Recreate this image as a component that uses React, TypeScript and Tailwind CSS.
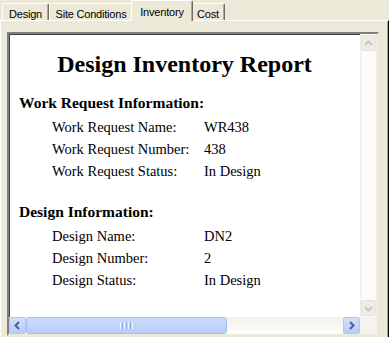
import React from 'react';

interface Field {
  label: string;
  value: string;
}

const workRequest: Field[] = [
  { label: 'Work Request Name:', value: 'WR438' },
  { label: 'Work Request Number:', value: '438' },
  { label: 'Work Request Status:', value: 'In Design' },
];

const design: Field[] = [
  { label: 'Design Name:', value: 'DN2' },
  { label: 'Design Number:', value: '2' },
  { label: 'Design Status:', value: 'In Design' },
];

const tabs = [
  { name: 'Design', width: 'w-[47px]' },
  { name: 'Site Conditions', width: 'w-[84px]' },
  { name: 'Inventory', width: 'w-[62px]', active: true },
  { name: 'Cost', width: 'w-[34px]' },
];

function Chevron({ dir, color }: { dir: 'up' | 'down' | 'left' | 'right'; color: string }) {
  const points = {
    up: '3,8 6.5,4.5 10,8',
    down: '3,5 6.5,8.5 10,5',
    left: '8,3 4.5,6.5 8,10',
    right: '5,3 8.5,6.5 5,10',
  }[dir];
  return (
    <svg width="13" height="13" viewBox="0 0 13 13">
      <polyline points={points} fill="none" stroke={color} strokeWidth="2" />
    </svg>
  );
}

function Section({ title, fields }: { title: string; fields: Field[] }) {
  return (
    <div>
      <div className="pl-[10px] text-[15.5px] leading-[20px] font-bold">{title}</div>
      <div className="mt-[3px] pl-[43px] text-[14.5px] leading-[22px]">
        {fields.map((f) => (
          <div key={f.label} className="flex">
            <span className="w-[152px] shrink-0">{f.label}</span>
            <span>{f.value}</span>
          </div>
        ))}
      </div>
    </div>
  );
}

export default function App() {
  return (
    <div className="w-[389px] h-[337px] overflow-hidden bg-[#ECE9D8] flex flex-col">
      {/* tab strip */}
      <div className="h-[20px] flex items-end pl-[2px] font-['Liberation_Sans',sans-serif] text-[11px] tracking-[-0.2px] text-black">
        {tabs.map((t) =>
          t.active ? (
            <div
              key={t.name}
              className={`${t.width} -mx-[2px] h-[21px] -mb-[1px] relative z-10 bg-[#ECE9D8] border-t border-l border-white border-r border-r-[#716F64] rounded-t-[2px] flex justify-center pt-[3px] shadow-[inset_-1px_0_0_#ACA899]`}
            >
              {t.name}
            </div>
          ) : (
            <div
              key={t.name}
              className={`${t.width} h-[17px] bg-[#ECE9D8] border-t border-l border-white border-r border-r-[#716F64] rounded-t-[2px] flex justify-center pt-[2px] shadow-[inset_-1px_0_0_#ACA899]`}
            >
              {t.name}
            </div>
          )
        )}
      </div>

      {/* tab page */}
      <div className="flex-1 border-t border-l border-white border-r border-r-[#000000] shadow-[inset_-1px_0_0_#ACA899] pl-[6px] pr-[9px] pt-[11px]">
        <div className="h-[304px] border-2 border-t-[#808080] border-l-[#808080] border-r-[#ECE9D8] border-b-[#ECE9D8] shadow-[inset_1px_1px_0_#404040,inset_-1px_-1px_0_#D4D0C8] bg-white flex flex-col">
          <div className="flex-1 flex min-h-0">
            {/* report */}
            <div className="flex-1 font-['Liberation_Serif',serif] text-black">
              <div className="mt-[16px] text-center text-[24px] leading-[28px] font-bold">
                Design Inventory Report
              </div>
              <div className="mt-[15px]">
                <Section title="Work Request Information:" fields={workRequest} />
              </div>
              <div className="mt-[20px]">
                <Section title="Design Information:" fields={design} />
              </div>
            </div>

            {/* disabled vertical scrollbar */}
            <div className="w-[17px] bg-[#FBFBF9] border-l border-r border-[#EEEDE7] flex flex-col justify-between pt-[1px] pb-[1px]">
              <div className="h-[16px] bg-[#EEEDE5] border border-[#E3E1D8] rounded-[2px] flex items-center justify-center">
                <Chevron dir="up" color="#C9C7BA" />
              </div>
              <div className="h-[16px] bg-[#EEEDE5] border border-[#E3E1D8] rounded-[2px] flex items-center justify-center">
                <Chevron dir="down" color="#C9C7BA" />
              </div>
            </div>
          </div>

          {/* horizontal scrollbar */}
          <div className="h-[17px] flex">
            <div className="flex-1 flex bg-gradient-to-b from-[#F3F1EC] to-[#FEFEFB]">
              <div className="w-[17px] h-[17px] bg-gradient-to-b from-[#D2DEFC] to-[#B9CCF9] border border-[#B4C6F4] rounded-[2px] flex items-center justify-center">
                <Chevron dir="left" color="#4D6185" />
              </div>
              <div className="w-[201px] h-[17px] bg-gradient-to-b from-[#CCDBFD] to-[#B8CDFA] border border-[#A7BEF2] rounded-[3px] flex items-center justify-center gap-[1px]">
                <span className="w-[1px] h-[7px] bg-[#EEF4FE]" />
                <span className="w-[1px] h-[7px] bg-[#8CABF0]" />
                <span className="w-[1px] h-[7px] bg-[#EEF4FE]" />
                <span className="w-[1px] h-[7px] bg-[#8CABF0]" />
                <span className="w-[1px] h-[7px] bg-[#EEF4FE]" />
                <span className="w-[1px] h-[7px] bg-[#8CABF0]" />
                <span className="w-[1px] h-[7px] bg-[#EEF4FE]" />
              </div>
              <div className="flex-1" />
              <div className="w-[17px] h-[17px] bg-gradient-to-b from-[#D2DEFC] to-[#B9CCF9] border border-[#B4C6F4] rounded-[2px] flex items-center justify-center">
                <Chevron dir="right" color="#4D6185" />
              </div>
            </div>
            <div className="w-[17px] bg-[#F4F3EE]" />
          </div>
        </div>
      </div>
    </div>
  );
}
